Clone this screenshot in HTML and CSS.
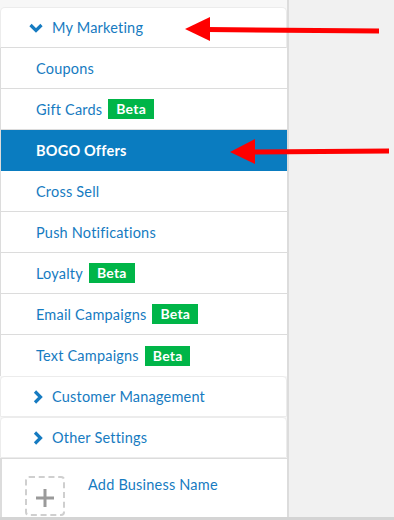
FILE: index.html
```html
<!doctype html>
<html lang="en">
  <head>
    <meta charset="UTF-8" />
    <meta name="viewport" content="width=device-width, initial-scale=1.0" />
    <title>Marketing Menu</title>
    <link rel="stylesheet" href="styles.css">
  </head>
  <body>
    <div class="page">
      <nav class="sidebar">
        <div class="section open">
          <svg class="chevron" viewBox="0 0 14 10" width="14" height="10">
            <path d="M1.5 2 L7 7.5 L12.5 2" fill="none" stroke="currentColor" stroke-width="3.2" />
          </svg>
          <span>My Marketing</span>
        </div>

        <ul class="sub-list">
          <li class="sub-item">Coupons</li>
          <li class="sub-item">Gift Cards <span class="badge">Beta</span></li>
          <li class="sub-item active">BOGO Offers</li>
          <li class="sub-item">Cross Sell</li>
          <li class="sub-item">Push Notifications</li>
          <li class="sub-item">Loyalty <span class="badge">Beta</span></li>
          <li class="sub-item">Email Campaigns <span class="badge">Beta</span></li>
          <li class="sub-item">Text Campaigns <span class="badge">Beta</span></li>
        </ul>

        <div class="section">
          <svg class="chevron" viewBox="0 0 10 14" width="10" height="14">
            <path d="M2 1.5 L7.5 7 L2 12.5" fill="none" stroke="currentColor" stroke-width="3.2" />
          </svg>
          <span>Customer Management</span>
        </div>
        <div class="section">
          <svg class="chevron" viewBox="0 0 10 14" width="10" height="14">
            <path d="M2 1.5 L7.5 7 L2 12.5" fill="none" stroke="currentColor" stroke-width="3.2" />
          </svg>
          <span>Other Settings</span>
        </div>

        <div class="business">
          <div class="add-box">
            <svg viewBox="0 0 20 20" width="20" height="20">
              <path d="M10 1 V19 M1 10 H19" stroke="#9a9a9a" stroke-width="3" />
            </svg>
          </div>
          <span class="business-name">Add Business Name</span>
        </div>
      </nav>
      <div class="content"></div>

      <!-- annotation arrows -->
      <svg class="arrow arrow-top" viewBox="0 0 196 26" width="196" height="26">
        <polygon points="0,12 25,0 25,24" fill="#ff0000" />
        <line x1="22" y1="12.5" x2="194" y2="14" stroke="#ff0000" stroke-width="5" />
      </svg>
      <svg class="arrow arrow-bogo" viewBox="0 0 160 26" width="160" height="26">
        <polygon points="0,13 25,0 25,25" fill="#ff0000" />
        <line x1="22" y1="13" x2="159" y2="12" stroke="#ff0000" stroke-width="5" />
      </svg>
    </div>
  </body>
</html>
```

FILE: styles.css
```css
:root {
  --blue: #167bc1;
  --active: #0a7cc0;
  --green: #00b548;
  --line: #dcdcdc;
  --grey: #f1f1f1;
}

* {
  margin: 0;
  padding: 0;
  box-sizing: border-box;
}

body {
  font-family: "Lato", "Open Sans", sans-serif;
  background: var(--grey);
  -webkit-font-smoothing: antialiased;
}

.page {
  position: relative;
  display: flex;
  height: 520px;
  border-bottom: 3px solid #d4d4d4;
}

.sidebar {
  width: 289px;
  flex-shrink: 0;
  background: #f7f7f7;
  border-right: 2px solid var(--line);
  padding-top: 7px;
  display: flex;
  flex-direction: column;
}

.content {
  flex: 1;
}

.section {
  display: flex;
  align-items: center;
  gap: 9px;
  height: 41px;
  padding-left: 32px;
  background: white;
  border: 1px solid #ececec;
  border-radius: 4px 4px 0 0;
  color: var(--blue);
  font-size: 14.5px;
  letter-spacing: 0.2px;
}

.section.open {
  padding-left: 28px;
  gap: 9px;
  border-bottom-color: var(--line);
  border-radius: 5px 5px 0 0;
}

.sub-list {
  list-style: none;
  background: white;
  border-left: 1px solid var(--line);
}

.sub-item {
  display: flex;
  align-items: center;
  gap: 6px;
  height: 41px;
  padding-left: 35px;
  border-bottom: 1px solid var(--line);
  color: var(--blue);
  font-size: 14.5px;
  letter-spacing: 0.2px;
}

.sub-item:last-child {
  border-bottom: none;
}

.sub-item.active {
  background: var(--active);
  color: white;
  font-weight: 700;
  border-bottom-color: var(--active);
}

.badge {
  display: inline-block;
  background: var(--green);
  color: white;
  font-weight: 700;
  font-size: 14px;
  line-height: 20px;
  padding: 0 8px;
}

.business {
  flex: 1;
  display: flex;
  align-items: flex-start;
  gap: 23px;
  margin-right: -2px;
  padding: 17px 0 0 23px;
  background: white;
  border-top: 1px solid var(--line);
  border-left: 2px solid var(--line);
  border-right: 2px solid var(--line);
}

.add-box {
  width: 40px;
  height: 40px;
  border: 2px dashed #cfcfcf;
  border-radius: 4px;
  display: flex;
  align-items: center;
  justify-content: center;
}

.add-box svg {
  margin-top: 3px;
}

.business-name {
  color: var(--blue);
  font-size: 14.5px;
  letter-spacing: 0.2px;
  line-height: 18px;
}

.arrow {
  position: absolute;
}

.arrow-top {
  left: 185px;
  top: 17px;
}

.arrow-bogo {
  left: 230px;
  top: 139px;
}
```
